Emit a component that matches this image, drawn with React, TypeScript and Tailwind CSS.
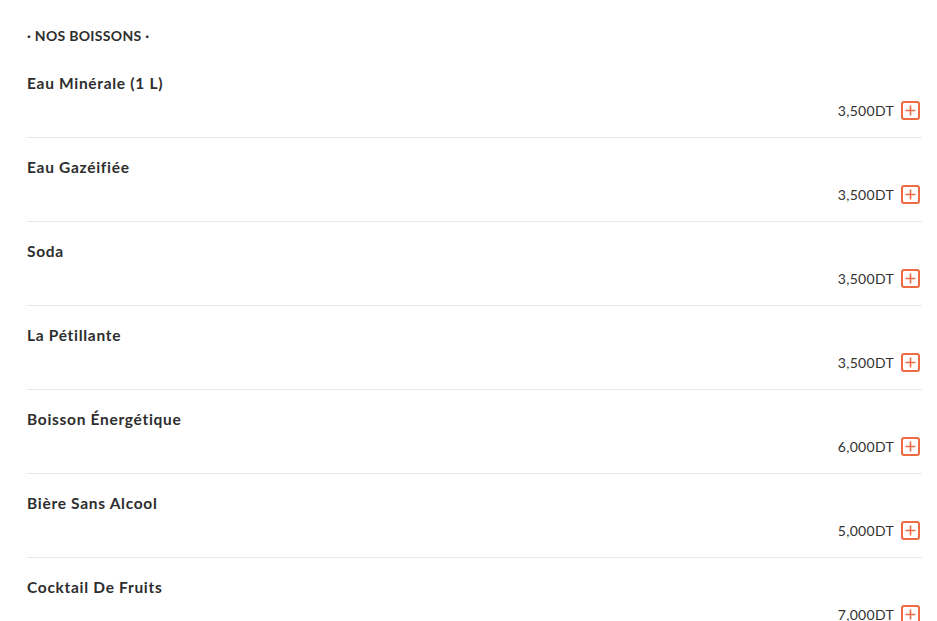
import { Plus } from "lucide-react";

const boissons = [
  { name: "Eau Minérale (1 L)", price: "3,500DT" },
  { name: "Eau Gazéifiée", price: "3,500DT" },
  { name: "Soda", price: "3,500DT" },
  { name: "La Pétillante", price: "3,500DT" },
  { name: "Boisson Énergétique", price: "6,000DT" },
  { name: "Bière Sans Alcool", price: "5,000DT" },
  { name: "Cocktail De Fruits", price: "7,000DT" },
];

export default function App() {
  return (
    <div className="min-h-screen bg-white pl-[27px] pr-[15px] pt-[26px] text-[#2e2e2e] font-['Lato',sans-serif]">
      <h2 className="text-[14px] leading-[20px] font-bold uppercase tracking-[0.3px]">· Nos boissons ·</h2>

      <div className="mt-[8px]">
        {boissons.map((b) => (
          <div key={b.name} className="pt-[17px] pb-[17px] border-b border-[#e8e8e8]">
            <p className="text-[15.5px] leading-[24px] font-bold tracking-[0.7px]">{b.name}</p>
            <div className="mt-[5px] h-[20px] flex items-center justify-end gap-[7px] pr-[2px]">
              <span className="text-[14px] text-[#333] tracking-[0.3px]">{b.price}</span>
              <button className="w-[19px] h-[19px] rounded-[3px] border-2 border-[#ee6a43] text-[#ee6a43] flex items-center justify-center">
                <Plus size={15} strokeWidth={2.5} />
              </button>
            </div>
          </div>
        ))}
      </div>
    </div>
  );
}
